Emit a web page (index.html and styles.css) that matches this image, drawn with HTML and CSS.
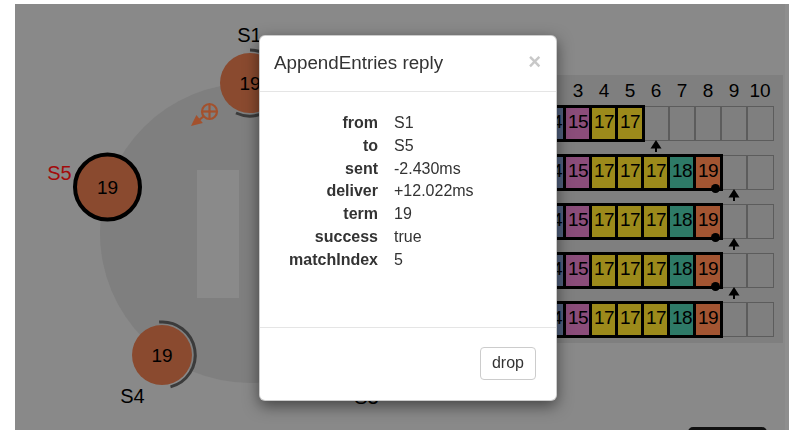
FILE: index.html
```html
<!DOCTYPE html>
<html>
<head>
    <meta charset="UTF-8">
    <title>Raft Scope</title>
    <link rel="stylesheet" href="styles.css">
</head>
<body>
    <div class="stage">
        <div class="sim">
            <svg class="ring" width="440" height="423" viewBox="15 4 440 423">
                <circle class="ring-disc" cx="250" cy="233" r="150"/>
                <rect class="pause-bar" x="197" y="170" width="42" height="128"/>
                <rect class="pause-bar" x="261" y="170" width="42" height="128"/>

                <!-- S1 -->
                <path class="timer" d="M250 50 A33 33 0 1 1 236 113"/>
                <circle class="server-body" cx="250" cy="83" r="30"/>
                <text class="term" x="250" y="90">19</text>
                <text class="server-name" x="249.5" y="41.5">S1</text>

                <!-- S2 and S3 sit under the dialog -->
                <circle class="server-body" cx="393" cy="187" r="30"/>
                <circle class="server-body" cx="338" cy="354" r="30"/>
                <text class="server-name" x="366.5" y="404">S3</text>

                <!-- S4 -->
                <path class="timer" d="M159.1 322.1 A33 33 0 0 1 170.5 386.9"/>
                <circle class="server-body" cx="162" cy="355" r="30"/>
                <text class="term" x="162" y="362">19</text>
                <text class="server-name" x="132.5" y="402.5">S4</text>

                <!-- S5, leader -->
                <circle class="server-body leader" cx="107.5" cy="187" r="32.5"/>
                <text class="term" x="107.5" y="194">19</text>
                <text class="server-name candidate" x="59.5" y="180">S5</text>

                <!-- AppendEntries reply in flight -->
                <g class="message">
                    <circle cx="209.5" cy="111.5" r="7.5"/>
                    <line x1="202" y1="111.5" x2="217" y2="111.5"/>
                    <line x1="209.5" y1="104" x2="209.5" y2="119"/>
                    <line x1="203.5" y1="116.5" x2="199" y2="120"/>
                    <polygon points="191,126 202.8,122.9 196.4,115.1"/>
                </g>
            </svg>

            <div class="logs">
                <div class="log-head">
                    <div></div>
                    <div></div><div></div><div>3</div><div>4</div><div>5</div>
                    <div>6</div><div>7</div><div>8</div><div>9</div><div>10</div>
                </div>

                <div class="log-row">
                    <div class="log-name"></div>
                    <div class="entry t14"></div>
                    <div class="entry t14">14</div>
                    <div class="entry t15">15</div>
                    <div class="entry t17">17</div>
                    <div class="entry t17">17</div>
                    <div class="entry"></div>
                    <div class="entry"></div>
                    <div class="entry"></div>
                    <div class="entry"></div>
                    <div class="entry"></div>
                    <svg class="next-index" style="--i: 6" width="12" height="13" viewBox="0 0 12 13"><polygon points="6,0 11.5,8.5 0.5,8.5"/><rect x="5" y="8" width="2" height="4"/></svg>
                </div>

                <div class="log-row">
                    <div class="log-name"></div>
                    <div class="entry t14"></div>
                    <div class="entry t14">14</div>
                    <div class="entry t15">15</div>
                    <div class="entry t17">17</div>
                    <div class="entry t17">17</div>
                    <div class="entry t17">17</div>
                    <div class="entry t18">18</div>
                    <div class="entry t19">19</div>
                    <div class="entry"></div>
                    <div class="entry"></div>
                    <span class="match-index" style="--i: 8"></span>
                    <svg class="next-index" style="--i: 9" width="12" height="13" viewBox="0 0 12 13"><polygon points="6,0 11.5,8.5 0.5,8.5"/><rect x="5" y="8" width="2" height="4"/></svg>
                </div>

                <div class="log-row">
                    <div class="log-name"></div>
                    <div class="entry t14"></div>
                    <div class="entry t14">14</div>
                    <div class="entry t15">15</div>
                    <div class="entry t17">17</div>
                    <div class="entry t17">17</div>
                    <div class="entry t17">17</div>
                    <div class="entry t18">18</div>
                    <div class="entry t19">19</div>
                    <div class="entry"></div>
                    <div class="entry"></div>
                    <span class="match-index" style="--i: 8"></span>
                    <svg class="next-index" style="--i: 9" width="12" height="13" viewBox="0 0 12 13"><polygon points="6,0 11.5,8.5 0.5,8.5"/><rect x="5" y="8" width="2" height="4"/></svg>
                </div>

                <div class="log-row">
                    <div class="log-name"></div>
                    <div class="entry t14"></div>
                    <div class="entry t14">14</div>
                    <div class="entry t15">15</div>
                    <div class="entry t17">17</div>
                    <div class="entry t17">17</div>
                    <div class="entry t17">17</div>
                    <div class="entry t18">18</div>
                    <div class="entry t19">19</div>
                    <div class="entry"></div>
                    <div class="entry"></div>
                    <span class="match-index" style="--i: 8"></span>
                    <svg class="next-index" style="--i: 9" width="12" height="13" viewBox="0 0 12 13"><polygon points="6,0 11.5,8.5 0.5,8.5"/><rect x="5" y="8" width="2" height="4"/></svg>
                </div>

                <div class="log-row">
                    <div class="log-name"></div>
                    <div class="entry t14"></div>
                    <div class="entry t14">14</div>
                    <div class="entry t15">15</div>
                    <div class="entry t17">17</div>
                    <div class="entry t17">17</div>
                    <div class="entry t17">17</div>
                    <div class="entry t18">18</div>
                    <div class="entry t19">19</div>
                    <div class="entry"></div>
                    <div class="entry"></div>
                </div>
            </div>
        </div>

        <div class="controls">
            <button class="dark-btn"></button>
        </div>
    </div>

    <div class="modal">
        <div class="modal-header">
            <h4 class="modal-title">AppendEntries reply</h4>
            <span class="close">&times;</span>
        </div>
        <div class="modal-body">
            <dl class="details">
                <dt>from</dt><dd>S1</dd>
                <dt>to</dt><dd>S5</dd>
                <dt>sent</dt><dd>-2.430ms</dd>
                <dt>deliver</dt><dd>+12.022ms</dd>
                <dt>term</dt><dd>19</dd>
                <dt>success</dt><dd>true</dd>
                <dt>matchIndex</dt><dd>5</dd>
            </dl>
        </div>
        <div class="modal-footer">
            <button class="btn">drop</button>
        </div>
    </div>
</body>
</html>
```

FILE: styles.css
```css
html, body {
    margin: 0;
    height: 100%;
    overflow: hidden;
    background: #fff;
    font-family: "Liberation Sans", Arial, sans-serif;
}
.stage {
    margin: 4px 0 0 15px;
    height: 426px;
    overflow: hidden;
    background: #898989;
    border-right: 4px solid #8e8e8e;
    display: flex;
    flex-direction: column;
}
.sim {
    display: flex;
    align-items: flex-start;
    height: 423px;
    flex: none;
}
.ring {
    flex: none;
    display: block;
}
.ring-disc {
    fill: #7f7f7f;
}
.pause-bar {
    fill: #8a8a8a;
}
.server-body {
    fill: #8a4a2f;
}
.server-body.leader {
    stroke: #000;
    stroke-width: 4;
}
.timer {
    fill: none;
    stroke: #3b3b3b;
    stroke-width: 3;
}
.term {
    font-size: 19px;
    text-anchor: middle;
    fill: #000;
}
.server-name {
    font-size: 20px;
    text-anchor: middle;
    fill: #000;
}
.server-name.candidate {
    fill: #a30b0b;
}
.message circle, .message line {
    fill: none;
    stroke: #a3512d;
    stroke-width: 2.2;
}
.message polygon {
    fill: #a3512d;
}

/* logs */
.logs {
    margin-top: 71px;
    width: 328px;
    box-sizing: border-box;
    padding: 0 10px 7px 0;
    background: #7f7f7f;
}
.log-head, .log-row {
    display: grid;
    grid-template-columns: 58px repeat(10, 26px);
}
.log-head div {
    height: 32px;
    line-height: 32px;
    text-align: center;
    font-size: 19px;
    color: #000;
}
.log-row {
    position: relative;
    height: 33px;
    margin-top: 16px;
}
.log-head + .log-row {
    margin-top: 0;
}
.entry {
    box-sizing: border-box;
    height: 33px;
    outline: 1px solid #5c5c5c;
    outline-offset: -0.5px;
    text-align: center;
    font-size: 19px;
    line-height: 30px;
    letter-spacing: -0.5px;
    color: #000;
}
.entry.t14, .entry.t15, .entry.t17, .entry.t18, .entry.t19 {
    position: relative;
    z-index: 1;
    outline: 3px solid #000;
    outline-offset: -1.5px;
}
.t14 { background: #51607e; }
.t15 { background: #8b4d7a; }
.t17 { background: #9c8a1b; }
.t18 { background: #2e7a67; }
.t19 { background: #a35532; }

.next-index {
    position: absolute;
    top: 33px;
    left: calc(var(--i) * 26px + 39px);
    fill: #000;
}
.match-index {
    position: absolute;
    z-index: 2;
    top: 28px;
    left: calc(var(--i) * 26px + 52px - 4.5px);
    width: 9px;
    height: 9px;
    border-radius: 50%;
    background: #000;
}

.controls {
    display: flex;
    justify-content: flex-end;
    padding-right: 18px;
}
.dark-btn {
    flex: none;
    width: 79px;
    height: 30px;
    border: none;
    border-radius: 5px;
    background: #111;
}

/* modal */
.modal {
    position: fixed;
    z-index: 10;
    left: 259px;
    top: 35px;
    width: 298px;
    box-sizing: border-box;
    background: #fff;
    border: 1px solid rgba(0,0,0,0.2);
    border-radius: 6px;
    box-shadow: 0 5px 15px rgba(0,0,0,0.5);
    color: #333;
}
.modal-header {
    display: flex;
    justify-content: space-between;
    align-items: flex-start;
    padding: 16px 15px 18px 14px;
    border-bottom: 1px solid #e5e5e5;
}
.modal-title {
    margin: 0;
    font-size: 18.8px;
    font-weight: normal;
    line-height: 21px;
}
.close {
    font-size: 22px;
    font-weight: bold;
    line-height: 1;
    color: #c8c8c8;
    margin-top: -1px;
}
.modal-body {
    padding: 20px 16px 55px;
}
.details {
    display: grid;
    grid-template-columns: 102px 1fr;
    column-gap: 16px;
    margin: 0;
    font-size: 16px;
    line-height: 22.8px;
}
.details dt {
    text-align: right;
    font-weight: bold;
}
.details dd {
    margin: 0;
}
.modal-footer {
    display: flex;
    justify-content: flex-end;
    padding: 19px 20px 20px;
    border-top: 1px solid #e5e5e5;
}
.btn {
    height: 33px;
    padding: 4px 11px;
    border: 1px solid #ccc;
    border-radius: 4px;
    background: #fff;
    color: #333;
    font-family: "Liberation Sans", Arial, sans-serif;
    font-size: 16px;
}
```
